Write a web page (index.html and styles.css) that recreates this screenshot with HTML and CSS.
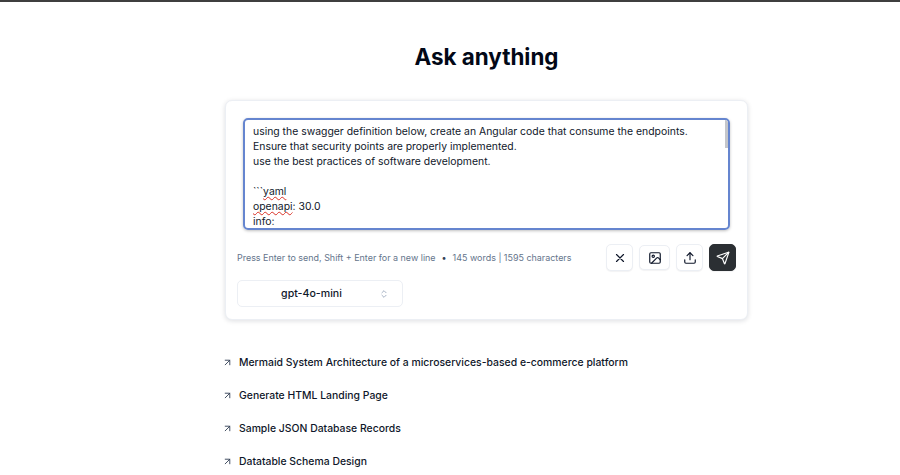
FILE: index.html
```html
<!DOCTYPE html>
<html lang="en">
<head>
<meta charset="utf-8">
<title>Ask anything</title>
<link rel="stylesheet" href="styles.css">
</head>
<body>
<main class="page">
  <h1 class="title">Ask anything</h1>
  <section class="card">
    <div class="editor">
      <div class="editor-text">
        <div>using the swagger definition below, create an Angular code that consume the endpoints.</div>
        <div>Ensure that security points are properly implemented.</div>
        <div>use the best practices of software development.</div>
        <div class="blank">&nbsp;</div>
        <div>```<span class="spell">yaml</span></div>
        <div><span class="spell">openapi</span>: 30.0</div>
        <div>info:</div>
      </div>
      <div class="scrollbar"><div class="thumb"></div></div>
    </div>
    <div class="toolbar">
      <div class="hint"><span>Press Enter to send, Shift + Enter for a new line</span><span class="dot">•</span><span>145 words | 1595 characters</span></div>
      <div class="actions">
        <button class="btn btn-clear" aria-label="Clear"><svg width="14" height="14" viewBox="0 0 24 24" class="icon"><path d="M18 6 6 18M6 6l12 12"/></svg></button>
        <button class="btn btn-image" aria-label="Image"><svg width="14" height="14" viewBox="0 0 24 24" class="icon"><rect x="3" y="3" width="18" height="18" rx="2"/><circle cx="9" cy="9" r="2"/><path d="m21 15-3.1-3.1a2 2 0 0 0-2.8 0L6 21"/></svg></button>
        <button class="btn btn-upload" aria-label="Upload"><svg width="14" height="14" viewBox="0 0 24 24" class="icon"><path d="M21 15v4a2 2 0 0 1-2 2H5a2 2 0 0 1-2-2v-4"/><path d="m17 8-5-5-5 5"/><path d="M12 3v12"/></svg></button>
        <button class="btn btn-send" aria-label="Send"><svg width="14" height="14" viewBox="0 0 24 24" class="icon"><path d="M14.5 21.7a.5.5 0 0 0 .9 0l6.5-19a.5.5 0 0 0-.6-.6l-19 6.5a.5.5 0 0 0 0 .9l7.9 3.2a2 2 0 0 1 1.1 1.1z"/><path d="m21.9 2.1-10.9 10.9"/></svg></button>
      </div>
    </div>
    <button class="model">
      <span class="model-name">gpt-4o-mini</span>
      <svg width="10" height="10" viewBox="0 0 24 24" class="icon chev"><path d="m7 15 5 5 5-5"/><path d="m7 9 5-5 5 5"/></svg>
    </button>
  </section>
  <ul class="suggestions">
    <li><svg width="11" height="11" viewBox="0 0 24 24" class="icon"><path d="M7 7h10v10"/><path d="M7 17 17 7"/></svg><span>Mermaid System Architecture of a microservices-based e-commerce platform</span></li>
    <li><svg width="11" height="11" viewBox="0 0 24 24" class="icon"><path d="M7 7h10v10"/><path d="M7 17 17 7"/></svg><span>Generate HTML Landing Page</span></li>
    <li><svg width="11" height="11" viewBox="0 0 24 24" class="icon"><path d="M7 7h10v10"/><path d="M7 17 17 7"/></svg><span>Sample JSON Database Records</span></li>
    <li><svg width="11" height="11" viewBox="0 0 24 24" class="icon"><path d="M7 7h10v10"/><path d="M7 17 17 7"/></svg><span>Datatable Schema Design</span></li>
  </ul>
</main>
</body>
</html>
```
FILE: styles.css
```css
* { box-sizing: border-box; }
html, body { margin: 0; height: 475px; overflow: hidden; background: #fff; }
body { font-family: Inter, "Liberation Sans", sans-serif; color: #020817; border-top: 2px solid #3f3f3f; }
.page { width: 523px; margin: 0 0 0 225px; display: flex; flex-direction: column; }
.title { margin: 40px 0 0; height: 30px; font-size: 22.4px; line-height: 30px; font-weight: 700; text-align: center; }
.card { margin-top: 28px; height: 220px; padding: 17px 11px 0; border: 1px solid #eceff4; border-radius: 7px; background: #fff; box-shadow: 0 1px 5px rgba(15,23,42,.14); display: flex; flex-direction: column; }
.editor { position: relative; margin: 0 6px; height: 112px; border: 2px solid #6585cf; border-radius: 5px; overflow: hidden; box-shadow: 0 1px 3px rgba(0,0,0,.25); flex: none; }
.editor-text { padding: 4px 8px; font-size: 10.42px; line-height: 15px; color: #0f172a; }
.spell { text-decoration: underline wavy #d93025 1px; text-underline-offset: 1px; text-decoration-skip-ink: none; }
.scrollbar { position: absolute; top: 0; right: 0; width: 3px; height: 100%; }
.thumb { width: 100%; height: 28px; background: #c4c6cb; }
.toolbar { margin-top: 14px; display: flex; justify-content: space-between; align-items: center; height: 27px; flex: none; }
.hint { font-size: 8.95px; color: #64748b; display: flex; white-space: pre; }
.dot { margin: 0 6px; color: #334155; }
.actions { display: flex; align-items: center; gap: 6px; }
.btn { height: 27px; width: 27px; padding: 0; display: flex; align-items: center; justify-content: center; background: #fff; border: 1px solid #eceff4; border-radius: 5px; color: #0f172a; box-shadow: 0 1px 1px rgba(15,23,42,.05); }
.btn-image { width: 31px; height: 25px; }
.btn-send { background: #2b2f33; border-color: #2b2f33; color: #fff; }
.icon { fill: none; stroke: currentColor; stroke-width: 2; stroke-linecap: round; stroke-linejoin: round; flex: none; }
.model { margin: 9px 0 0; width: 166px; height: 27px; padding: 0 13px 0 0; background: #fff; border: 1px solid #eceff4; border-radius: 5px; font: 500 10.6px Inter, "Liberation Sans", sans-serif; color: #0f172a; display: flex; align-items: center; justify-content: space-between; flex: none; }
.model-name { flex: 1; text-align: center; padding-left: 6px; }
.chev { color: #94a3b8; }
.suggestions { list-style: none; margin: 26.5px 0 0; padding: 0; display: flex; flex-direction: column; }
.suggestions li { height: 32.85px; display: flex; align-items: center; gap: 6px; font-size: 10.42px; font-weight: 500; color: #0f172a; }
.suggestions .icon { color: #334155; margin-left: -3px; }
```
